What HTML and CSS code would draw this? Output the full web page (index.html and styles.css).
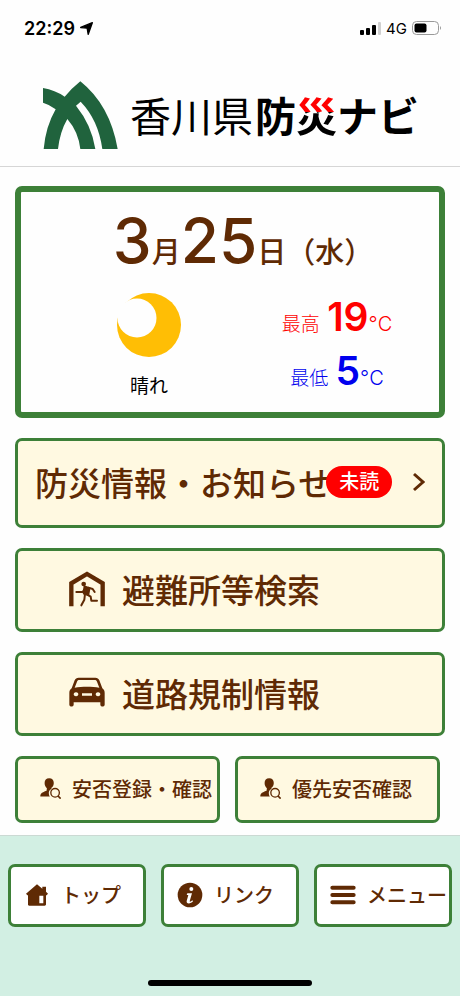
FILE: index.html
```html
<!DOCTYPE html>
<html lang="ja">
<head>
<meta charset="utf-8">
<meta name="viewport" content="width=device-width, initial-scale=1">
<title>香川県防災ナビ</title>
<link rel="stylesheet" href="styles.css">
</head>
<body>
<svg class="sprite" aria-hidden="true">
  <symbol id="person-search" viewBox="0 0 64 64">
    <path d="M28 1c9 0 14 6 14 14 0 7-3 12-7 15v3c-6 3-9 9-8 15 0 3 1 6 3 8H1c0-9 5-12 19-17l1-8c-4-3-7-9-7-16C14 7 19 1 28 1z"/>
    <circle cx="46" cy="45" r="13" fill="none" stroke="currentColor" stroke-width="4"/>
    <path d="M54 54l9 9" stroke="currentColor" stroke-width="5"/>
  </symbol>
</svg>
<div class="page">
  <div class="status">
    <div class="status-side">
      <span class="clock">22:29</span>
      <svg width="13" height="13" viewBox="0 0 38 38"><path d="M36 2L24 36 21 18 2 16z" stroke="#000" stroke-width="4" stroke-linejoin="round"/></svg>
    </div>
    <div class="status-side">
      <svg width="21" height="13" viewBox="0 0 21 13"><rect y="8" width="4" height="5" rx="1"/><rect x="6" y="6" width="4" height="7" rx="1"/><rect x="12" y="3" width="4" height="10" rx="1"/><rect x="18" width="3" height="13" rx="1" fill="#d0d0d0"/></svg>
      <span class="network">4G</span>
      <svg width="30" height="14" viewBox="0 0 30 14"><rect x=".5" y=".5" width="26" height="13" rx="4" fill="none" stroke="#999"/><rect x="2.500" y="2.500" width="12" height="9" rx="2"/><path d="M28 5q2 2 0 4z" fill="#999"/></svg>
    </div>
  </div>
  <header class="brand">
    <svg width="75" height="68" viewBox="39 33 225 204" fill="#20633d"><path d="M39 54Q75 60 104 80 125 55 151 34 240 105 263 237H217Q205 150 152 95L138 107Q185 165 196 237H151Q145 185 112 147 90 185 84 237H41Q47 170 77 118 60 104 39 98z"/></svg>
    <h1 class="brand-name"><span class="brand-pref">香川県</span><span>防</span><span class="brand-alert">災</span><span>ナビ</span></h1>
  </header>
  <main class="content">
    <section class="weather">
      <h2 class="date"><span class="date-num">3</span>月<span class="date-num">25</span>日（水）</h2>
      <div class="forecast">
        <div class="sky">
          <svg width="64" height="64" viewBox="0 0 64 64"><circle cx="32" cy="32" r="32" fill="#ffbe05"/><circle cx="20" cy="25" r="19.500" fill="#fefefe"/></svg>
          <span>晴れ</span>
        </div>
        <div class="temps">
          <p class="temp high">最高 <b>19</b><span class="unit">°C</span></p>
          <p class="temp low">最低 <b>5</b><span class="unit">°C</span></p>
        </div>
      </div>
    </section>
    <a class="tile news" href="#news"><span>防災情報・お知らせ</span><span class="badge">未読</span>
      <svg class="arrow" width="12" height="20" viewBox="0 0 12 20"><path d="M1 2l9 8-9 8" fill="none" stroke="currentColor" stroke-width="3"/></svg>
    </a>
    <a class="tile wide" href="#shelter">
      <svg width="36" height="36" viewBox="0 0 108 108"><path d="M7 106V37L54 9l47 28v69" fill="none" stroke="currentColor" stroke-width="13"/><circle cx="44" cy="39" r="7"/><path d="M46 46l16 5-4 22-14-5z" stroke="currentColor" stroke-width="5" stroke-linejoin="round"/><path d="M50 49l-9 14H22M58 50l13 4 6 9M48 69l-2 17-9 17M55 71l10 6 2 12h17" fill="none" stroke="currentColor" stroke-width="6" stroke-linejoin="round" stroke-linecap="round"/></svg>
      <span>避難所等検索</span>
    </a>
    <a class="tile wide" href="#road">
      <svg width="36" height="36" viewBox="0 0 108 108"><path fill-rule="evenodd" d="M29 8h50c6 0 10 3 12 8l9 24c5 4 7 8 7 14v35c0 7-13 7-13 0v-7H14v7c0 7-13 7-13 0V54c0-6 2-10 7-14l9-24c2-5 6-8 12-8zm2 7c-4 0-6 2-7 5l-7 18c22-4 52-4 74 0l-7-18c-1-3-3-5-7-5zM21 52a7 6 0 1 0 .1 0zm66 0a7 6 0 1 0 .1 0zM39 55v7h30v-7z"/></svg>
      <span>道路規制情報</span>
    </a>
    <div class="pair">
      <a class="tile small" href="#safety"><svg width="21" height="21"><use href="#person-search"/></svg><span>安否登録・確認</span></a>
      <a class="tile small" href="#priority"><svg width="21" height="21"><use href="#person-search"/></svg><span>優先安否確認</span></a>
    </div>
  </main>
  <footer class="dock">
    <nav class="tabs">
      <button class="tab" type="button"><svg width="26" height="26" viewBox="0 0 78 78"><path fill-rule="evenodd" d="M39 7l16 13v-6h11v15l6 6-4 5h-2v27c0 3-2 4-4 4H16c-3 0-4-1-4-4V40h-2l-4-5zM46 41v23h12V41z"/></svg><span>トップ</span></button>
      <button class="tab" type="button"><svg width="26" height="26" viewBox="0 0 78 78"><circle cx="39" cy="39" r="37"/><circle cx="43" cy="21" r="6" fill="#fff"/><path d="M31 34h14l-7 24c0 3 5 0 8-3l2 3c-7 8-21 9-19-1l5-18h-5z" fill="#fff"/></svg><span>リンク</span></button>
      <button class="tab" type="button"><svg width="26" height="26" viewBox="0 0 78 78"><path d="M7 17h64M7 39h64M7 61h64" stroke="currentColor" stroke-width="12" stroke-linecap="round"/></svg><span>メニュー</span></button>
    </nav>
    <div class="home-bar"></div>
  </footer>
</div>
</body>
</html>
```
FILE: styles.css
```css
* {
  box-sizing: border-box;
}

body {
  margin: 0;
  background: #fefefe;
  color: #000;
  font-family: Inter, "Noto Sans CJK JP", sans-serif;
}

.sprite {
  position: absolute;
  width: 0;
  height: 0;
}

svg {
  flex: none;
}

.page {
  display: flex;
  flex-direction: column;
  min-height: 100vh;
}

.status {
  display: flex;
  justify-content: space-between;
  height: 56px;
  padding: 0 18px 0 24px;
}

.status-side {
  display: flex;
  align-items: center;
  gap: 5px;
}

.clock {
  font-size: 18px;
  font-weight: 600;
}

.network {
  font-size: 15px;
}

.brand {
  display: flex;
  align-items: center;
  gap: 12px;
  height: 111px;
  padding: 8px 40px 0 43px;
  border-bottom: 1px solid #d6d6d6;
}

.brand-name {
  display: flex;
  margin: 0;
  padding-bottom: 2px;
  font-family: "Noto Sans CJK JP", sans-serif;
  font-size: 41px;
  font-weight: 700;
  line-height: 60px;
  white-space: nowrap;
}

.brand-pref {
  margin-right: 2px;
  font-weight: 400;
}

.brand-alert {
  background: linear-gradient(#f00 47%, #000 47%);
  background-clip: text;
  -webkit-background-clip: text;
  color: transparent;
}

.content {
  display: flex;
  flex-direction: column;
  gap: 20px;
  padding: 19px 15px 12px;
}

.weather {
  height: 232px;
  padding: 11px 8px 0 34px;
  border: 6px solid #3d8038;
  border-radius: 7px;
}

.date {
  margin: 0;
  color: #5f2a04;
  font-size: 29px;
  font-weight: 500;
  line-height: 1;
  text-align: center;
  white-space: nowrap;
}

.date-num {
  font-size: 62px;
  line-height: 76px;
}

.forecast {
  display: grid;
  grid-template-columns: 1fr 1fr;
  padding-top: 11px;
}

.sky {
  display: flex;
  flex-direction: column;
  align-items: center;
  gap: 16px;
  padding-top: 3px;
  font-size: 19px;
  line-height: 28px;
}

.temp {
  margin: 0;
  font-size: 19px;
  font-weight: 300;
  line-height: 1;
  text-align: center;
  white-space: nowrap;
}

.temp b {
  margin-left: 2px;
  font-size: 39px;
  font-weight: 600;
  line-height: 54px;
}

.unit {
  font-size: 20px;
}

.high {
  color: #f00;
}

.low {
  color: #00e;
}

.tile {
  display: flex;
  align-items: center;
  padding-bottom: 2px;
  border: 3px solid #3d8038;
  border-radius: 7px;
  background: #fff9e1;
  color: #5f2a04;
  font-weight: 500;
  text-decoration: none;
  white-space: nowrap;
}

.tile svg,
.tab svg {
  fill: currentColor;
}

.news {
  height: 90px;
  padding-right: 17px;
  padding-left: 17px;
  font-size: 33px;
}

.badge {
  padding: 0 13px;
  margin-left: -5px;
  border-radius: 16px;
  background: #f00;
  color: #fff;
  font-size: 20px;
  line-height: 32px;
}

.arrow {
  margin-left: auto;
}

.wide {
  gap: 17px;
  height: 84px;
  padding-left: 51px;
  font-size: 33px;
}

.pair {
  display: grid;
  grid-template-columns: 1fr 1fr;
  gap: 15px;
  padding-right: 5px;
}

.small {
  gap: 11px;
  min-width: 0;
  height: 67px;
  padding-left: 22px;
  font-size: 20px;
}

.dock {
  display: flex;
  flex: 1;
  flex-direction: column;
  justify-content: space-between;
  align-items: center;
  padding: 28px 8px 10px;
  border-top: 1px solid #cbd9d3;
  background: #d2efe3;
}

.tabs {
  display: grid;
  grid-template-columns: repeat(3, 1fr);
  gap: 15px;
  width: 100%;
}

.tab {
  display: flex;
  align-items: center;
  gap: 11px;
  min-width: 0;
  height: 63px;
  padding: 0 0 2px 13px;
  overflow: hidden;
  border: 3px solid #3d8038;
  border-radius: 7px;
  background: #fff;
  color: #5f2a04;
  font: 500 20px Inter, "Noto Sans CJK JP", sans-serif;
  white-space: nowrap;
}

.home-bar {
  width: 164px;
  height: 6px;
  border-radius: 3px;
  background: #000;
}
```
